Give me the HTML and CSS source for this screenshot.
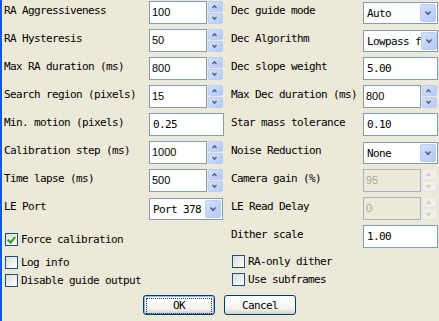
FILE: index.html
```html
<!DOCTYPE html>
<html lang="en">
<head>
  <meta charset="UTF-8">
  <title>Advanced setup</title>
  <link rel="stylesheet" href="styles.css">
</head>
<body>
  <div class="dialog">
    <div class="grid">
      <div class="label">RA Aggressiveness</div>
      <div class="spin"><div class="field num">100</div><div class="spin-btn"><span class="up"></span><span class="down"></span></div></div>
      <div class="label right">Dec guide mode</div>
      <div class="combo wide"><span>Auto</span><div class="drop"></div></div>

      <div class="label">RA Hysteresis</div>
      <div class="spin"><div class="field num">50</div><div class="spin-btn"><span class="up"></span><span class="down"></span></div></div>
      <div class="label right">Dec Algorithm</div>
      <div class="combo wide"><span>Lowpass f</span><div class="drop"></div></div>

      <div class="label">Max RA duration (ms)</div>
      <div class="spin"><div class="field num">800</div><div class="spin-btn"><span class="up"></span><span class="down"></span></div></div>
      <div class="label right">Dec slope weight</div>
      <div class="field text wide">5.00</div>

      <div class="label">Search region (pixels)</div>
      <div class="spin"><div class="field num">15</div><div class="spin-btn"><span class="up"></span><span class="down"></span></div></div>
      <div class="label right">Max Dec duration (ms)</div>
      <div class="spin"><div class="field num">800</div><div class="spin-btn"><span class="up"></span><span class="down"></span></div></div>

      <div class="label">Min. motion (pixels)</div>
      <div class="field text">0.25</div>
      <div class="label right">Star mass tolerance</div>
      <div class="field text wide">0.10</div>

      <div class="label">Calibration step (ms)</div>
      <div class="spin"><div class="field num">1000</div><div class="spin-btn"><span class="up"></span><span class="down"></span></div></div>
      <div class="label right">Noise Reduction</div>
      <div class="combo wide"><span>None</span><div class="drop"></div></div>

      <div class="label">Time lapse (ms)</div>
      <div class="spin"><div class="field num">500</div><div class="spin-btn"><span class="up"></span><span class="down"></span></div></div>
      <div class="label right">Camera gain (%)</div>
      <div class="spin disabled"><div class="field num">95</div><div class="spin-btn"><span class="up"></span><span class="down"></span></div></div>

      <div class="label">LE Port</div>
      <div class="combo"><span>Port 378</span><div class="drop"></div></div>
      <div class="label right">LE Read Delay</div>
      <div class="spin disabled"><div class="field num">0</div><div class="spin-btn"><span class="up"></span><span class="down"></span></div></div>

      <label class="check two"><span class="box checked"></span>Force calibration</label>
      <div class="label right">Dither scale</div>
      <div class="field text wide">1.00</div>

      <label class="check two"><span class="box"></span>Log info</label>
      <label class="check two right up1"><span class="box"></span>RA-only dither</label>

      <label class="check two"><span class="box"></span>Disable guide output</label>
      <label class="check two right up1"><span class="box"></span>Use subframes</label>
    </div>

    <div class="buttons">
      <button class="btn default"><span>OK</span></button>
      <button class="btn">Cancel</button>
    </div>
  </div>
</body>
</html>
```

FILE: styles.css
```css
body {
  margin: 0;
  background: #ece9d8;
  font-family: "DejaVu Sans Mono", "Liberation Mono", monospace;
  font-size: 11px;
  color: #000;
}

.dialog {
  height: 321px;
  border-left: 2px solid #0a5ae6;
  padding-left: 2px;
  box-sizing: border-box;
}

.grid {
  display: grid;
  grid-template-columns: 145px 82px 132px 76px;
  grid-template-rows: repeat(9, 28px) 18px 18px;
  padding-top: 1px;
}

.label {
  padding-top: 3px;
  line-height: 13px;
  letter-spacing: -0.62px;
  white-space: nowrap;
}

.field {
  box-sizing: border-box;
  height: 23px;
  border: 1px solid #7f9db9;
  background: #fff;
  padding-left: 3px;
  line-height: 21px;
  white-space: nowrap;
  overflow: hidden;
}

.field.text {
  width: 75px;
  letter-spacing: -0.62px;
}

.field.num {
  width: 58px;
  font-family: "Liberation Sans", Arial, sans-serif;
  font-size: 11px;
  padding-left: 2px;
}

.spin {
  display: flex;
  gap: 1px;
}

.spin-btn {
  width: 15px;
  height: 23px;
  display: flex;
  flex-direction: column;
  gap: 1px;
}

.spin-btn span {
  flex: 1;
  box-sizing: border-box;
  border: 1px solid #b9cdf6;
  border-radius: 2px;
  background: linear-gradient(135deg, #d4e1fc, #b3c8f5);
  position: relative;
}

.spin-btn span::after {
  content: "";
  position: absolute;
  left: 3px;
  top: 3px;
  width: 5px;
  height: 5px;
  border-left: 2px solid #4d6185;
  border-top: 2px solid #4d6185;
  transform: scale(0.7) rotate(45deg);
  box-sizing: border-box;
}

.spin-btn .down::after {
  top: 1px;
  transform: scale(0.7) rotate(225deg);
}

.disabled .field {
  background: #ece9d8;
  color: #aca899;
  border-color: #a0b4cc;
}

.disabled .spin-btn span {
  background: #f1f0ea;
  border-color: #e6e4dc;
}

.disabled .spin-btn span::after {
  border-color: #c9c7ba;
}

.combo {
  box-sizing: border-box;
  width: 74px;
  height: 22px;
  margin-top: 1px;
  border: 1px solid #7f9db9;
  background: #fff;
  display: flex;
  align-items: center;
  justify-content: space-between;
  padding: 1px 1px 1px 3px;
  letter-spacing: -0.62px;
  white-space: nowrap;
  overflow: hidden;
}

.combo.wide {
  width: 75px;
}

.drop {
  flex: none;
  width: 16px;
  height: 18px;
  box-sizing: border-box;
  border: 1px solid #b9cdf6;
  border-radius: 2px;
  background: linear-gradient(135deg, #d4e1fc, #b3c8f5);
  position: relative;
}

.drop::after {
  content: "";
  position: absolute;
  left: 4px;
  top: 4px;
  width: 6px;
  height: 6px;
  border-right: 2px solid #4d6185;
  border-bottom: 2px solid #4d6185;
  transform: rotate(45deg) scale(0.75);
  box-sizing: border-box;
}

.check {
  display: flex;
  align-items: center;
  gap: 3px;
  padding-left: 1px;
  letter-spacing: -0.62px;
  white-space: nowrap;
}

.check.two {
  grid-column: span 2;
}

.check.right {
  grid-column: 3 / span 2;
}

.check.up1 {
  margin-top: -2px;
}

.box {
  width: 13px;
  height: 13px;
  box-sizing: border-box;
  border: 1px solid #1c5180;
  background: linear-gradient(135deg, #dcdcd7, #fff);
  position: relative;
  flex: none;
}

.box.checked::after {
  content: "";
  position: absolute;
  left: 3px;
  top: 1px;
  width: 3px;
  height: 6px;
  border-right: 2px solid #21a121;
  border-bottom: 2px solid #21a121;
  transform: rotate(40deg);
}

.buttons {
  display: flex;
  justify-content: center;
  gap: 9px;
  margin-top: 6px;
  padding-right: 4px;
}

.btn {
  width: 72px;
  height: 20px;
  padding: 0;
  font-family: "DejaVu Sans Mono", "Liberation Mono", monospace;
  font-size: 11px;
  letter-spacing: -0.62px;
  color: #000;
  border: 1px solid #003c74;
  border-radius: 3px;
  background: linear-gradient(#ffffff, #f3f3ef 70%, #d6d0c5);
}

.btn.default {
  box-shadow: inset 0 0 0 1px #97b6f0;
}

.btn.default span {
  display: block;
  margin: 2px;
  line-height: 14px;
  border: 1px dotted #333;
}
```
